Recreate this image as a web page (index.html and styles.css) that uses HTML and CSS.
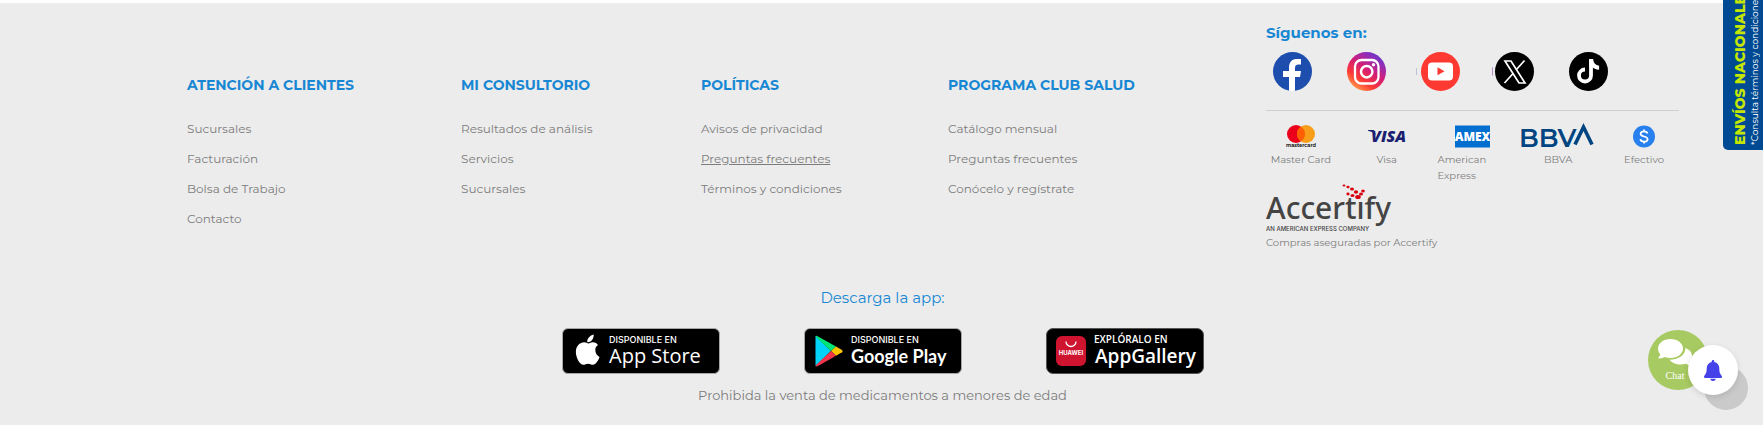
FILE: index.html
```html
<!DOCTYPE html>
<html lang="es">
<head>
<meta charset="utf-8">
<meta name="viewport" content="width=device-width, initial-scale=1">
<title>Farmacia</title>
<link rel="stylesheet" href="styles.css">
</head>
<body>
<footer class="footer">
  <div class="footer-top">
    <nav class="links" aria-labelledby="h-atencion">
      <h2 class="links-title" id="h-atencion">ATENCIÓN A CLIENTES</h2>
      <ul class="links-list">
        <li><a href="#">Sucursales</a></li>
        <li><a href="#">Facturación</a></li>
        <li><a href="#">Bolsa de Trabajo</a></li>
        <li><a href="#">Contacto</a></li>
      </ul>
    </nav>
    <nav class="links" aria-labelledby="h-consultorio">
      <h2 class="links-title" id="h-consultorio">MI CONSULTORIO</h2>
      <ul class="links-list">
        <li><a href="#">Resultados de análisis</a></li>
        <li><a href="#">Servicios</a></li>
        <li><a href="#">Sucursales</a></li>
      </ul>
    </nav>
    <nav class="links" aria-labelledby="h-politicas">
      <h2 class="links-title" id="h-politicas">POLÍTICAS</h2>
      <ul class="links-list">
        <li><a href="#">Avisos de privacidad</a></li>
        <li><a class="is-active" href="#">Preguntas frecuentes</a></li>
        <li><a href="#">Términos y condiciones</a></li>
      </ul>
    </nav>
    <nav class="links" aria-labelledby="h-club">
      <h2 class="links-title" id="h-club">PROGRAMA CLUB SALUD</h2>
      <ul class="links-list">
        <li><a href="#">Catálogo mensual</a></li>
        <li><a href="#">Preguntas frecuentes</a></li>
        <li><a href="#">Conócelo y regístrate</a></li>
      </ul>
    </nav>
    <section class="aside">
      <h2 class="follow-title">Síguenos en:</h2>
      <div class="social">
        <a href="#" aria-label="Facebook"><svg class="social-icon" viewBox="0 0 39 39"><circle cx="19.5" cy="19.500" r="19.500" fill="#1d4eae"/><path fill="#fff" d="M16 38.700V25h-6v-6h6v-3.500c0-6 3.500-8.500 8-8.500h4v5.500h-2.500c-2.500 0-3.500 1.200-3.500 3.500v3h6l-1 6h-5v13.700a19.500 19.500 0 0 1-6 0z"/></svg></a>
        <a href="#" aria-label="Instagram"><svg class="social-icon" viewBox="0 0 39 39"><defs><linearGradient id="ig" x1="0.2" y1="1" x2="0.85" y2="0.05"><stop offset="0" stop-color="#ffa84c"/><stop offset=".28" stop-color="#fd3b35"/><stop offset=".55" stop-color="#d61d74"/><stop offset=".85" stop-color="#8a2fbd"/><stop offset="1" stop-color="#5a37c8"/></linearGradient></defs><circle cx="19.500" cy="19.500" r="19.500" fill="url(#ig)"/><rect x="8" y="8" width="23.500" height="23.500" rx="6.500" fill="none" stroke="#fff" stroke-width="2.300"/><circle cx="19.700" cy="19.700" r="5.700" fill="none" stroke="#fff" stroke-width="2.500"/><circle cx="26.500" cy="12.800" r="1.700" fill="#fff"/></svg></a>
        <a href="#" aria-label="YouTube"><svg class="social-icon" viewBox="0 0 39 39"><path d="M-4.500 16v7" stroke="#bcc4d6"/><circle cx="19.500" cy="19.500" r="19.500" fill="#fe3931"/><rect x="7" y="10.500" width="25" height="18" rx="4" fill="#fff"/><path d="M16.500 15.300v8l7-4z" fill="#fe3931"/></svg></a>
        <a href="#" aria-label="X"><svg class="social-icon" viewBox="0 0 39 39"><path d="M-2.500 15.500v8" stroke="#b58fd0"/><circle cx="19.500" cy="19.500" r="19.500" fill="#000"/><path d="M10 9h6l14 22h-6zM29.500 8.500 20.800 18.300M18.300 21.200 9.500 31" fill="none" stroke="#fff" stroke-width="1.700"/></svg></a>
        <a href="#" aria-label="TikTok"><svg class="social-icon" viewBox="0 0 39 39"><circle cx="19.500" cy="19.500" r="19.500" fill="#000"/><path d="M22 7v16.500a6 6 0 1 1-6-6" fill="none" stroke="#fff" stroke-width="3.800"/><path d="M20.100 7h4c.3 4 2.500 6.200 6 6.800v3.900c-3.500-.2-5.500-1.300-7-2.700h-3z" fill="#fff"/></svg></a>
      </div>
      <ul class="payments">
        <li><svg class="pay-logo" width="30" height="23" viewBox="0 0 30 23"><circle cx="10" cy="9" r="9" fill="#eb001b"/><circle cx="20" cy="9" r="9" fill="#f79e1b"/><path d="M15 1.500a9 9 0 0 1 0 15 9 9 0 0 1 0-15z" fill="#ff5f00"/><text class="t-master" x="15" y="22" text-anchor="middle">mastercard</text></svg><span>Master Card</span></li>
        <li><svg class="pay-logo" width="42" height="23" viewBox="0 0 42 23"><path d="M2 5h6l2 5C8 8 5.500 6.500 2 5.800z" fill="#1a1f71"/><text class="t-visa" x="5" y="17">VISA</text></svg><span>Visa</span></li>
        <li class="pay-wide"><svg class="pay-logo" width="35" height="22" viewBox="0 0 35 22"><path d="M0 0h35v22H0z" fill="#016fd0"/><text class="t-amex" x="17.500" y="15" text-anchor="middle">AMEX</text></svg><span>American Express</span></li>
        <li><svg class="pay-logo" width="74" height="23" viewBox="0 0 74 23" aria-label="BBVA"><text class="t-bbva" x="-2" y="22">BBV</text><path d="M54 19.500 62.500 2l8.500 17.500" fill="none" stroke="#004481" stroke-width="3.600"/></svg><span>BBVA</span></li>
        <li><svg class="pay-logo" width="22" height="22" viewBox="0 0 22 22"><circle cx="11" cy="11" r="11" fill="#2880ee"/><path d="M14.500 8c-.4-1.500-1.700-2.200-3.500-2.200-2 0-3.400.9-3.400 2.500 0 3.700 7 1.700 7 5.400 0 1.600-1.500 2.500-3.600 2.500-2 0-3.400-.9-3.700-2.500M11 4v2m0 10v2" fill="none" stroke="#fff" stroke-width="1.700"/></svg><span>Efectivo</span></li>
      </ul>
      <svg class="accertify" width="122" height="48" viewBox="0 0 122 48"><text class="t-accertify" x="0" y="35">Accertıfy</text><g fill="#d9000d"><ellipse cx="78" cy="1.500" rx="1.500" ry="1"/><ellipse cx="82" cy="3" rx="1.600" ry="1.200"/><ellipse cx="86" cy="5" rx="2" ry="1.500"/><ellipse cx="90" cy="8" rx="2.200" ry="1.700"/><ellipse cx="97" cy="7" rx="1.800" ry="1.500"/><ellipse cx="95" cy="10" rx="2" ry="1.600"/><ellipse cx="82" cy="10" rx="1.600" ry="1.400"/><ellipse cx="86.500" cy="11.500" rx="2" ry="1.500"/><ellipse cx="92" cy="13" rx="2.800" ry="2"/></g><text class="t-amexco" x="0" y="47">AN AMERICAN EXPRESS COMPANY</text></svg>
      <p class="secure">Compras aseguradas por Accertify</p>
    </section>
  </div>
  <section class="apps">
    <h2 class="apps-title">Descarga la app:</h2>
    <div class="badges">
      <a href="#"><svg class="badge" viewBox="0 0 158 46"><rect x=".5" y=".5" width="157" height="45" rx="5.500" fill="#000" stroke="#a6a6a6"/><path fill="#fff" d="M34.600 23.300c0-2.700 2.200-4 2.400-4.200-1.400-2-3.400-2.200-4.200-2.300-1.800-.2-3.400 1-4.300 1-.9 0-2.300-1-3.700-1-3.800.1-7.500 3-7.500 8.700 0 5 3.300 11.400 6.700 11.400 1.600 0 2.300-1 4.200-1s2.500 1 4.200 1c2.800 0 5.200-4.500 6-7-2.200-.9-3.800-3.200-3.800-6.600zM31.400 15.200c1.200-1.500 2-3.500 1.800-5.400-3.300.7-6.200 4-5.700 6.900 1.400.1 2.900-.5 3.900-1.500z" transform="translate(-5.500 -4.500) scale(1.120)"/><text class="t-small" x="47" y="15">DISPONIBLE EN</text><text class="t-store" x="47" y="35">App Store</text></svg></a>
      <a href="#"><svg class="badge" viewBox="0 0 158 46"><rect x=".5" y=".5" width="157" height="45" rx="5.500" fill="#000" stroke="#a6a6a6"/><path d="M11.500 8v30L27 23z" fill="#00d3fa"/><path d="M11.500 8.500Q12 7 14 8.500L32 18.500 27 23z" fill="#00e676"/><path d="M32 18.500 38 22q1.500 1.200 0 2.300L32 27.700 27 23z" fill="#ffc400"/><path d="M11.500 37.500Q12 39 14 38L32 27.700 27 23z" fill="#f2354b"/><text class="t-small" x="47" y="15">DISPONIBLE EN</text><text class="t-play" x="47" y="35">Google Play</text></svg></a>
      <a href="#"><svg class="badge" viewBox="0 0 158 46"><rect x=".5" y=".5" width="157" height="45" rx="6.500" fill="#000" stroke="#555"/><rect x="10" y="8" width="30" height="30" rx="6" fill="#cf1430"/><path d="M20 13.500a5 5 0 0 0 10 0" fill="none" stroke="#fff" stroke-width="1.300"/><text class="t-huawei" x="25" y="27" text-anchor="middle">HUAWEI</text><text class="t-explore" x="48" y="15">EXPLÓRALO EN</text><text class="t-gallery" x="49" y="35">AppGallery</text></svg></a>
    </div>
    <p class="legal">Prohibida la venta de medicamentos a menores de edad</p>
  </section>
</footer>

<aside class="shipping"><div class="shipping-text"><strong>ENVÍOS NACIONALES</strong><small>*Consulta términos y condiciones</small></div></aside>

<button class="float float-top" type="button" aria-label="Subir"></button>
<button class="float float-chat" type="button"><svg width="34" height="28" viewBox="0 0 34 28"><g fill="#fff"><path d="M27.500 9c4 1.500 6.500 4.500 6.500 8 0 2.200-1 4.200-2.500 5.800.3 1.400 1.200 2.500 2.500 3.700-2.300.2-4.300-.5-6-1.700-6.500 2-13.500 0-16.500-4C20 20.500 27 17 27.500 9z"/><path d="M12.500 0C19.500 0 25 4.200 25 9.500S19.500 19 12.500 19c-2 0-4-.4-5.700-1C5 19 2.800 19.600 0 19.300c1.300-1.200 2-2.500 2.300-4C.8 13.700 0 11.700 0 9.500 0 4.200 5.500 0 12.500 0z"/></g></svg><span>Chat</span></button>
<button class="float float-bell" type="button" aria-label="Notificaciones"><svg width="18" height="21" viewBox="0 0 18 21"><path fill="#4542ea" d="M9 0c.8 0 1.300.6 1.300 1.400v.7c3 .6 5 3 5 6.200 0 4.500 1 5.700 2.500 7.700.6 1-.1 2-1 2H1.200c-1 0-1.600-1-1-2 1.500-2 2.500-3.200 2.500-7.700 0-3.200 2-5.600 5-6.200v-.7C7.700.6 8.200 0 9 0zM6.300 18.800h5.400C11.500 20.200 10.500 21 9 21s-2.500-.8-2.700-2.200z"/></svg></button>
</body>
</html>
```
FILE: styles.css
```css
* { box-sizing: border-box; }

body {
  margin: 0;
  background: #ececec;
  color: #7c7c7c;
  font-family: Montserrat, Inter, "Open Sans", sans-serif;
  font-size: 12px;
}

h2, p, ul { margin: 0; padding: 0; }
ul { list-style: none; }
a { color: inherit; text-decoration: none; }
svg { display: block; }

button { border: 0; padding: 0; cursor: pointer; }

.footer { border-top: 3px solid #fff; }

.footer-top {
  display: grid;
  grid-template-columns: 274fr 240fr 247fr 318fr 413fr;
  padding: 20px 84px 0 187px;
}

.links { padding-top: 52px; }

.links-title {
  color: #1787d4;
  font-size: 14px;
  line-height: 20px;
  font-weight: 700;
  white-space: nowrap;
}

.links-list { padding-top: 19px; }
.links-list li { line-height: 30px; }
.is-active { text-decoration: underline; }

.follow-title {
  color: #1787d4;
  font-size: 15px;
  line-height: 20px;
  font-weight: 700;
}

.social {
  display: flex;
  gap: 35px;
  padding: 9px 0 19px 7px;
  border-bottom: 1px solid #d0d0d0;
}

.social-icon { width: 39px; height: 39px; overflow: visible; }

.payments {
  display: grid;
  grid-template-columns: repeat(5, 1fr);
  padding-top: 14px;
  font-size: 10px;
  line-height: 16px;
  margin-right: -8px;
  margin-left: -8px;
}

.payments li {
  display: flex;
  flex-direction: column;
  align-items: center;
}

.pay-logo { height: 23px; margin-bottom: 4px; overflow: visible; }
.pay-wide span { width: 70px; }

.accertify { overflow: visible; }
.secure { font-size: 10px; line-height: 16px; padding-top: 3px; }

.apps {
  display: flex;
  flex-direction: column;
  align-items: center;
  padding: 37px 0 0 2px;
}

.apps-title {
  color: #1787d4;
  font-size: 15px;
  line-height: 20px;
  font-weight: 400;
}

.badges {
  display: flex;
  gap: 84px;
  padding: 20px 0 11px;
}

.badge { width: 158px; height: 46px; }

.legal { font-size: 13px; line-height: 20px; }

.t-master { font: 700 5px Montserrat, Inter, sans-serif; fill: #222; }
.t-visa { font: italic 800 16px "Open Sans", sans-serif; fill: #1a1f71; }
.t-amex { font: 800 12px "Open Sans", sans-serif; fill: #fff; }
.t-bbva { font: 600 26px Montserrat, Inter, sans-serif; fill: #004481; }
.t-accertify { font: 500 30px "Noto Sans", sans-serif; fill: #444; }
.t-amexco { font: 500 6px Inter, sans-serif; fill: #444; }
.t-small { font: 500 9px Inter, sans-serif; fill: #fff; }
.t-store { font: 500 20px "Open Sans", sans-serif; fill: #fff; }
.t-play { font: 700 18px Lato, sans-serif; fill: #fff; }
.t-huawei { font: 700 6px Inter, sans-serif; fill: #fff; }
.t-explore { font: 600 10px "Open Sans", sans-serif; fill: #fff; }
.t-gallery { font: 600 19px "Open Sans", sans-serif; fill: #fff; }

.shipping {
  position: fixed;
  top: 0;
  right: 0;
  width: 40px;
  height: 150px;
  overflow: hidden;
  border-bottom-left-radius: 5px;
  background: #004a93;
}

.shipping-text {
  position: absolute;
  right: 2px;
  bottom: 5px;
  display: flex;
  flex-direction: column;
  writing-mode: vertical-rl;
  transform: rotate(180deg);
  white-space: nowrap;
}

.shipping strong { color: #c5e600; font-size: 14px; line-height: 18px; font-weight: 800; }
.shipping small { color: #fff; font-size: 9px; line-height: 12px; }

.float {
  position: fixed;
  display: flex;
  flex-direction: column;
  align-items: center;
  justify-content: center;
  border-radius: 50%;
}

.float-top { right: 15px; bottom: 15px; width: 44px; height: 44px; background: #cacaca; }

.float-chat {
  right: 55px;
  bottom: 35px;
  width: 60px;
  height: 60px;
  gap: 3px;
  padding-right: 6px;
  background: #a8ca62;
  color: #fff;
  font: 10px "Liberation Serif", serif;
}

.float-bell {
  right: 25px;
  bottom: 30px;
  width: 50px;
  height: 50px;
  background: #fff;
  box-shadow: 0 2px 6px rgba(0, 0, 0, 0.12);
}
```
